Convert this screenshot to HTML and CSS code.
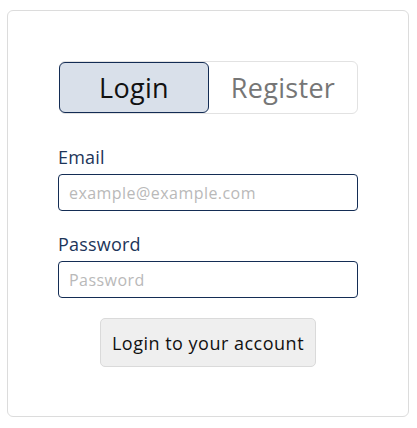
FILE: index.html
```html
<!DOCTYPE html>
<html>
<head>
<meta charset="utf-8">
<link rel="stylesheet" href="styles.css">
</head>
<body>
<div class="card">
  <div class="inner">
    <div class="toggle">
      <button class="tab active">Login</button>
      <button class="tab">Register</button>
    </div>
    <form class="form">
      <label class="label" for="email">Email</label>
      <input class="input" id="email" type="email" placeholder="example@example.com">
      <label class="label second" for="pw">Password</label>
      <input class="input" id="pw" type="password" placeholder="Password">
      <div class="actions">
        <button class="submit" type="button">Login to your account</button>
      </div>
    </form>
  </div>
</div>
</body>
</html>
```

FILE: styles.css
```css
* { box-sizing: border-box; }
html, body { margin: 0; background: #fff; }
body {
  padding: 10px 8px 11px 7px;
  font-family: "Open Sans", "Noto Sans", sans-serif;
}
.card {
  width: 402px;
  height: 407px;
  border: 1px solid #dcdcdc;
  border-radius: 6px;
  padding-top: 50px;
}
.inner {
  width: 300px;
  margin-left: 50px;
}
.toggle {
  display: flex;
  width: 299px;
  margin-left: 1px;
  height: 53px;
  border: 1px solid #e2e2e2;
  border-radius: 6px;
}
.tab {
  flex: 1;
  margin: 0;
  border: none;
  background: transparent;
  font-family: inherit;
  font-size: 27px;
  letter-spacing: 0.3px;
  color: #767676;
  padding: 0;
  cursor: pointer;
}
.tab.active {
  margin: 0 0 0 -1px;
  background: #d9e0ea;
  border: 1px solid #132c54;
  border-radius: 6px;
  color: #111;
}
.form {
  display: flex;
  flex-direction: column;
  margin-top: 31px;
}
.label {
  font-size: 18px;
  letter-spacing: 0.2px;
  color: #1d3559;
  line-height: 24px;
  margin-bottom: 5px;
}
.label.second { margin-top: 21px; }
.input {
  height: 37px;
  border: 1px solid #142d55;
  border-radius: 4px;
  padding: 0 10px;
  font-family: inherit;
  font-size: 16px;
  letter-spacing: 0.45px;
  color: #222;
}
.input::placeholder { color: #b9b9b9; }
.actions {
  display: flex;
  justify-content: center;
  margin-top: 20px;
}
.submit {
  width: 216px;
  height: 49px;
  padding: 0;
  background: #efefef;
  border: 1px solid #dadada;
  border-radius: 5px;
  font-family: inherit;
  font-size: 18px;
  letter-spacing: 0.5px;
  color: #111;
}
```
